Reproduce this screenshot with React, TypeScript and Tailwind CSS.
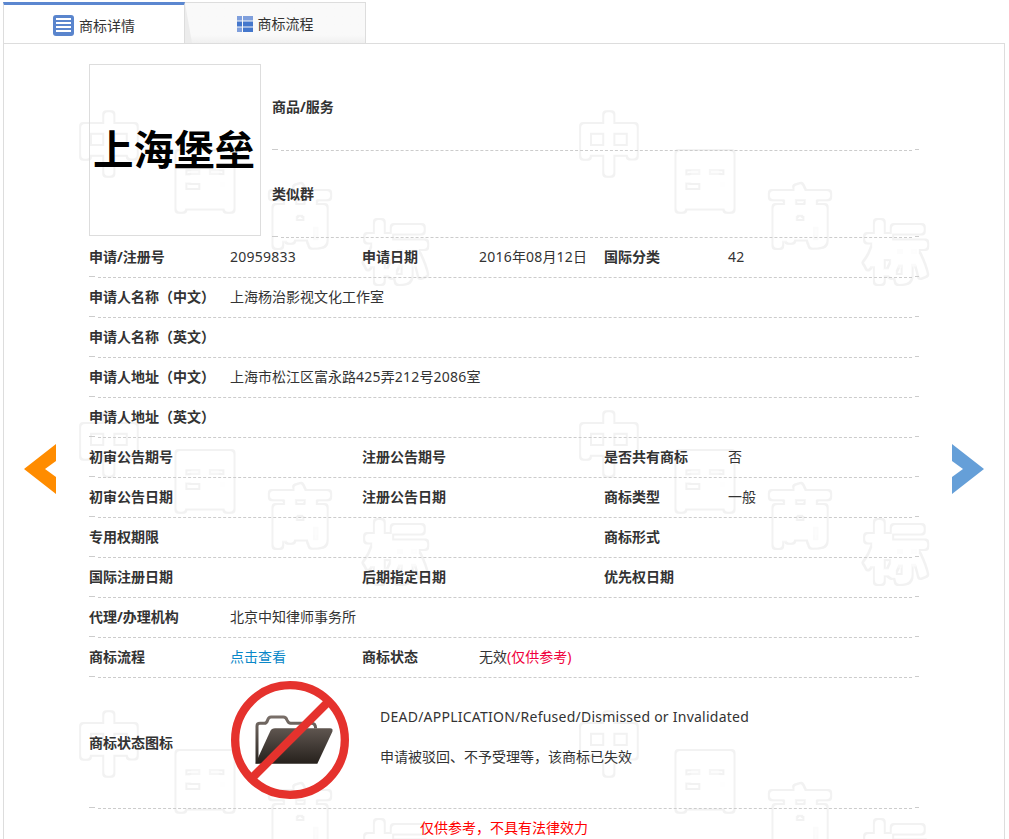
const FONT = "font-['Noto_Sans','Noto_Sans_CJK_SC',sans-serif]";

function Watermark() {
  const letters = [
    { c: "中", x: 0, y: 0 },
    { c: "国", x: 96, y: 36 },
    { c: "商", x: 191, y: 72 },
    { c: "标", x: 287, y: 108 },
  ];
  const tiles = [
    { x: 73, y: 124 },
    { x: 573, y: 124 },
    { x: 73, y: 424 },
    { x: 573, y: 424 },
    { x: 73, y: 724 },
    { x: 573, y: 724 },
  ];
  return (
    <svg width="1000" height="795" className="absolute left-0 top-0 pointer-events-none select-none" aria-hidden="true">
      <defs>
        <filter id="ring" filterUnits="userSpaceOnUse" x="0" y="0" width="1000" height="795">
          <feMorphology in="SourceAlpha" operator="erode" radius="2" result="inner" />
          <feComposite in="SourceGraphic" in2="inner" operator="out" />
        </filter>
      </defs>
      <g filter="url(#ring)" fill="#f2f2f2" stroke="#f2f2f2" strokeWidth="8" strokeLinejoin="round" strokeLinecap="round" fontSize="64" fontFamily="'Noto Sans CJK SC', sans-serif">
        {tiles.map((t) =>
          letters.map((l) => (
            <text key={`${t.x}-${t.y}-${l.c}`} x={t.x + l.x} y={t.y + l.y}>
              {l.c}
            </text>
          ))
        )}
      </g>
    </svg>
  );
}

function Line() {
  return (
    <div className="flex h-[2px] shrink-0">
      <div className="w-[6px] h-px bg-[#cccccc]" />
      <div className="flex-1 ml-[3px] mr-[3px] mt-px border-b border-dashed border-[#cccccc]" />
      <div className="w-[4px] h-px bg-[#cccccc]" />
    </div>
  );
}

function L({ children }: { children: React.ReactNode }) {
  return <span className="tracking-[0.24px]">{children}</span>;
}

function Label({ w, children }: { w: string; children?: React.ReactNode }) {
  return <div className={`${w} shrink-0 font-bold text-[#333333]`}>{children}</div>;
}

function Row({ children }: { children: React.ReactNode }) {
  return (
    <div className="flex flex-col h-10">
      <div className="flex-1 flex items-center pb-[2px]">{children}</div>
      <Line />
    </div>
  );
}

function Six({ a, b, c, d, e, f }: { a: string; b?: React.ReactNode; c?: string; d?: React.ReactNode; e?: string; f?: React.ReactNode }) {
  return (
    <Row>
      <Label w="w-[141px]">{a}</Label>
      <div className="w-[132px] shrink-0">{b}</div>
      <Label w="w-[117px]">{c}</Label>
      <div className="w-[125px] shrink-0">{d}</div>
      <Label w="w-[124px]">{e}</Label>
      <div className="flex-1">{f}</div>
    </Row>
  );
}

function Two({ a, b }: { a: string; b?: React.ReactNode }) {
  return (
    <Row>
      <Label w="w-[141px]">{a}</Label>
      <div className="flex-1">{b}</div>
    </Row>
  );
}

function DetailIcon() {
  return (
    <svg width="21" height="21" viewBox="0 0 21 21" className="shrink-0">
      <rect width="21" height="21" rx="3" fill="#5a85cd" />
      <rect x="3" y="3" width="15" height="2" fill="#ffffff" />
      <rect x="3" y="7" width="15" height="2" fill="#ffffff" />
      <rect x="3" y="11" width="15" height="2" fill="#ffffff" />
      <rect x="3" y="15" width="15" height="2" fill="#ffffff" />
    </svg>
  );
}

function FlowIcon() {
  return (
    <svg width="16" height="16" viewBox="0 0 16 16" className="shrink-0">
      <rect x="0" y="0" width="5" height="4.5" fill="#7f9fdc" />
      <rect x="6" y="0" width="10" height="4.5" fill="#7f9fdc" />
      <rect x="0" y="5.5" width="5" height="5" fill="#4477cc" />
      <rect x="6" y="5.5" width="10" height="5" fill="#4477cc" />
      <rect x="0" y="11.5" width="5" height="4.5" fill="#7f9fdc" />
      <rect x="6" y="11.5" width="10" height="4.5" fill="#4477cc" />
    </svg>
  );
}

function DeadIcon() {
  return (
    <svg width="118" height="118" viewBox="18 18 354 354" className="shrink-0">
      <defs>
        <linearGradient id="fold" x1="0" y1="0" x2="0" y2="1">
          <stop offset="0" stopColor="#5f5650" />
          <stop offset="1" stopColor="#26211c" />
        </linearGradient>
        <linearGradient id="back" gradientUnits="userSpaceOnUse" x1="0" y1="122" x2="0" y2="265">
          <stop offset="0" stopColor="#7a706a" />
          <stop offset="1" stopColor="#2a2520" />
        </linearGradient>
      </defs>
      <path
        d="M96 265V153Q96 145 105 145H118Q125 145 128 135Q131 126 138 126H175Q183 126 186 135Q190 145 197 145H260Q271 145 272 160"
        fill="none"
        stroke="url(#back)"
        strokeWidth="9"
      />
      <path d="M91 266L135 170Q140 160 150 160H315Q325 160 322 170L277 266Z" fill="url(#fold)" />
      <circle cx="195" cy="195" r="164.5" fill="none" stroke="#e5322d" strokeWidth="25" />
      <line x1="312" y1="78" x2="78" y2="312" stroke="#e5322d" strokeWidth="25" />
    </svg>
  );
}

export default function App() {
  return (
    <div className={`relative w-[1009px] h-[839px] overflow-hidden bg-white text-[14px] text-[#333333] ${FONT}`}>
      <div className="flex h-[43px] pl-[3px] pt-[2px]">
        <div className="w-[182px] border-t-[3px] border-l border-r border-t-[#5b87d0] border-l-[#dddddd] border-r-[#dddddd] flex items-center justify-center gap-[5px] pt-[3px]">
          <DetailIcon />
          <span>商标详情</span>
        </div>
        <div className="relative w-[181px] border-t border-r border-[#dddddd] bg-linear-to-b from-[#f9f9f9] from-80% to-[#f0f0f0] flex items-center justify-center gap-[5px] pt-[1px] overflow-hidden">
          <div className="absolute left-0 top-0 bottom-0 w-[7px] bg-[#ececec] [clip-path:polygon(0_0,100%_100%,0_100%)]" />
          <FlowIcon />
          <span>商标流程</span>
        </div>
      </div>

      <div className="relative h-[796px] ml-[3px] w-[1002px] border border-b-0 border-[#dddddd]">
        <Watermark />
        <div className="relative pl-[85px] pt-[20px] w-[915px]">
          <div className="flex h-[174px]">
            <div className="w-[172px] h-[172px] border border-[#dddddd] flex items-center justify-center shrink-0 pb-[3px] pr-[2px]">
              <span className="text-[40.5px] leading-none font-bold text-black font-['Noto_Sans_CJK_SC',sans-serif]">上海堡垒</span>
            </div>
            <div className="flex-1 ml-[11px] flex flex-col">
              <div className="flex flex-col h-[87px]">
                <div className="flex-1 flex items-center font-bold">商品/服务</div>
                <Line />
              </div>
              <div className="flex flex-col h-[87px]">
                <div className="flex-1 flex items-center font-bold">类似群</div>
                <Line />
              </div>
            </div>
          </div>

          <Six a="申请/注册号" b={<L>20959833</L>} c="申请日期" d={<span><L>2016</L>年<L>08</L>月<L>12</L>日</span>} e="国际分类" f={<L>42</L>} />
          <Two a="申请人名称（中文）" b="上海杨治影视文化工作室" />
          <Two a="申请人名称（英文）" />
          <Two a="申请人地址（中文）" b={<span>上海市松江区富永路<L>425</L>弄<L>212</L>号<L>2086</L>室</span>} />
          <Two a="申请人地址（英文）" />
          <Six a="初审公告期号" c="注册公告期号" e="是否共有商标" f="否" />
          <Six a="初审公告日期" c="注册公告日期" e="商标类型" f="一般" />
          <Six a="专用权期限" e="商标形式" />
          <Six a="国际注册日期" c="后期指定日期" e="优先权日期" />
          <Two a="代理/办理机构" b="北京中知律师事务所" />
          <Six
            a="商标流程"
            b={<span className="text-[#0a88c8]">点击查看</span>}
            c="商标状态"
            d={
              <span>
                无效<span className="text-[#f0003c]">(仅供参考)</span>
              </span>
            }
          />

          <div className="flex flex-col h-[131px]">
            <div className="flex-1 flex">
              <div className="w-[142px] shrink-0 self-center font-bold">商标状态图标</div>
              <div className="mt-[3px]">
                <DeadIcon />
              </div>
              <div className="ml-[31px] mt-[18px] flex flex-col">
                <div className="h-10 flex items-center"><L>DEAD/APPLICATION/Refused/Dismissed or Invalidated</L></div>
                <div className="h-10 flex items-center">申请被驳回、不予受理等，该商标已失效</div>
              </div>
            </div>
            <Line />
          </div>
        </div>
        <div className="relative h-[36px] flex items-center justify-center text-[#ff0000]">仅供参考，不具有法律效力</div>
      </div>

      <svg width="32" height="50" viewBox="0 0 32 50" className="absolute left-[24px] top-[444px]">
        <polygon points="32,0 0,25 32,50 32,33 21,25 32,17" fill="#ff8c00" />
      </svg>
      <svg width="32" height="50" viewBox="0 0 32 50" className="absolute left-[952px] top-[444px]">
        <polygon points="0,0 32,25 0,50 0,33 11,25 0,17" fill="#659fd8" />
      </svg>
    </div>
  );
}
